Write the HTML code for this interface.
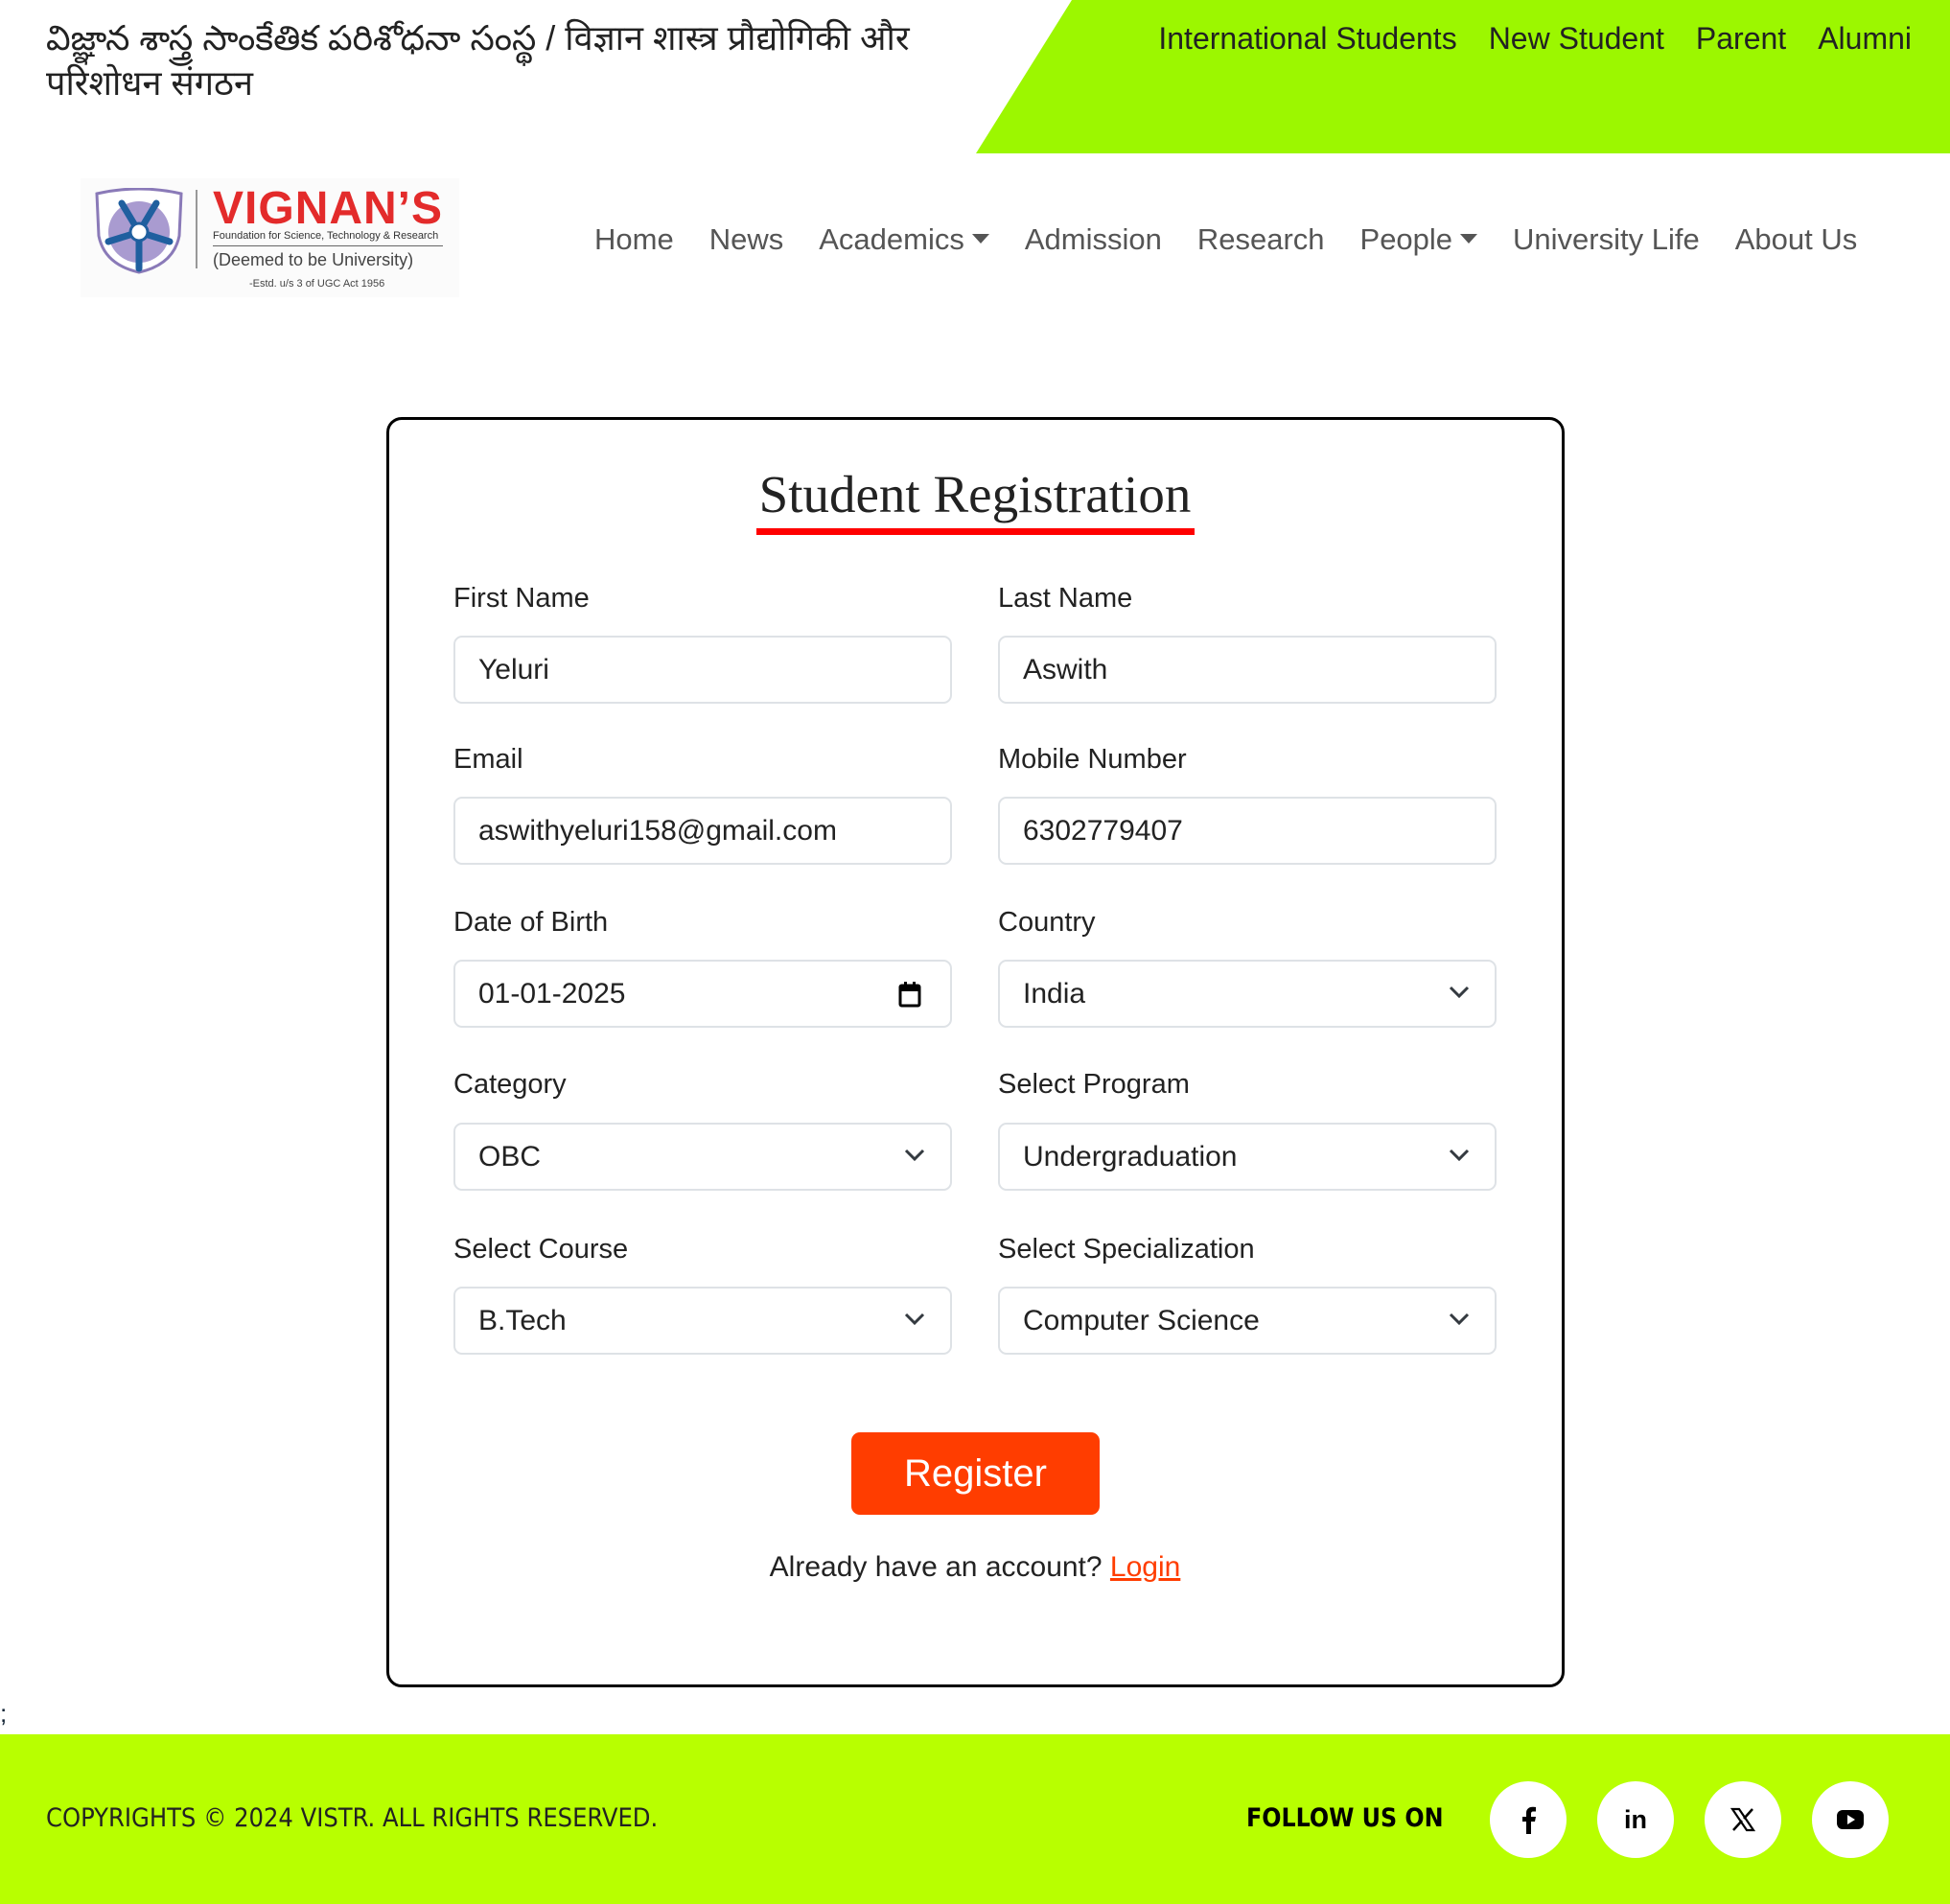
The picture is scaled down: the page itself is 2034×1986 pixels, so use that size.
<!DOCTYPE html>
<html><head><meta charset="utf-8"><style>
*{margin:0;padding:0;box-sizing:border-box}
body{width:2034px;height:1986px;position:relative;background:#fff;font-family:"Liberation Sans",Arial,sans-serif;color:#212529;overflow:hidden}
.abs{position:absolute}
.tl{left:48px;top:16px;font-size:36px;line-height:47px;color:#222;font-family:"Liberation Sans","Noto Sans CJK SC",sans-serif;width:1000px}
.green{left:0;top:0;width:2034px;height:160px;background:#9cf700;clip-path:polygon(1118px 0,2034px 0,2034px 160px,1018px 160px)}
.top{top:22px;right:40px;font-size:32px;color:#222;display:flex;gap:33px}
.nav{top:232px;left:620px;font-size:31px;color:#555;display:flex;gap:37px;white-space:nowrap}
.car::after{content:"";display:inline-block;border-left:9px solid transparent;border-right:9px solid transparent;border-top:10px solid #555;margin-left:8px;vertical-align:6px}
.card{left:403px;top:435px;width:1229px;height:1325px;border:3px solid #000;border-radius:16px}
.title{left:0;width:2034px;top:484px;text-align:center;font-family:"Liberation Serif",serif;font-size:55px;color:#222}
.ul{left:789px;top:551px;width:457px;height:7px;background:#f00}
.lb{font-size:29px;color:#222}
.in{width:520px;height:71px;border:2px solid #dee2e6;border-radius:9px;font-size:30px;color:#222;padding-left:24px;line-height:67px}
.chev{position:absolute;right:26px;top:24px}
.btn{left:888px;top:1494px;width:259px;height:86px;background:#ff3d00;border-radius:9px;color:#fff;font-size:40px;text-align:center;line-height:86px}
.al{left:0;width:2034px;text-align:center;top:1618px;font-size:30px;color:#222}
.al span{color:#ff3d00;text-decoration:underline}
.foot{left:0;top:1809px;width:2034px;height:177px;background:#b8ff00}
.circ{width:80px;height:80px;border-radius:50%;background:#fff;top:1858px;display:flex;align-items:center;justify-content:center}
</style></head><body>
<div class="abs green"></div>
<div class="abs tl">విజ్ఞాన శాస్త్ర సాంకేతిక పరిశోధనా సంస్థ / विज्ञान शास्त्र प्रौद्योगिकी और परिशोधन संगठन</div>
<div class="abs top"><span>International Students</span><span>New Student</span><span>Parent</span><span>Alumni</span></div>

<div class="abs" style="left:84px;top:186px;width:395px;height:124px;background:#fbfbfb"></div>
<svg class="abs" style="left:97px;top:196px" width="96" height="90" viewBox="0 0 96 90">
<path d="M4 6 Q48 -4 92 6 L90 50 Q84 80 48 88 Q12 80 6 50 Z" fill="#fff" stroke="#8a7ab8" stroke-width="3"/>
<circle cx="48" cy="46" r="32" fill="#a99bd0"/>
<g stroke="#1f5f9f" stroke-width="7" stroke-linecap="round"><line x1="48" y1="46" x2="48" y2="84"/><line x1="48" y1="46" x2="30" y2="16"/><line x1="48" y1="46" x2="66" y2="16"/><line x1="48" y1="46" x2="16" y2="56"/><line x1="48" y1="46" x2="80" y2="56"/></g>
<circle cx="48" cy="46" r="9" fill="#fff" stroke="#1f5f9f" stroke-width="3"/></svg>
<div class="abs" style="left:204px;top:198px;width:2px;height:82px;background:#999"></div>
<div class="abs" style="left:222px;top:190px;font-size:48px;font-weight:bold;color:#e32b2b;letter-spacing:1px">VIGNAN’S</div>
<div class="abs" style="left:222px;top:240px;font-size:11px;color:#333">Foundation for Science, Technology &amp; Research</div>
<div class="abs" style="left:222px;top:256px;width:240px;height:1px;background:#666"></div>
<div class="abs" style="left:222px;top:261px;font-size:18px;color:#444">(Deemed to be University)</div>
<div class="abs" style="left:260px;top:290px;font-size:11px;color:#444">-Estd. u/s 3 of UGC Act 1956</div>

<div class="abs nav"><span>Home</span><span>News</span><span class="car">Academics</span><span>Admission</span><span>Research</span><span class="car">People</span><span>University Life</span><span>About Us</span></div>

<div class="abs card"></div>
<div class="abs title">Student Registration</div>
<div class="abs ul"></div>

<div class="abs lb" style="left:473px;top:608px">First Name</div>
<div class="abs lb" style="left:1041px;top:608px">Last Name</div>
<div class="abs in" style="left:473px;top:663px">Yeluri</div>
<div class="abs in" style="left:1041px;top:663px">Aswith</div>

<div class="abs lb" style="left:473px;top:776px">Email</div>
<div class="abs lb" style="left:1041px;top:776px">Mobile Number</div>
<div class="abs in" style="left:473px;top:831px">aswithyeluri158@gmail.com</div>
<div class="abs in" style="left:1041px;top:831px">6302779407</div>

<div class="abs lb" style="left:473px;top:946px">Date of Birth</div>
<div class="abs lb" style="left:1041px;top:946px">Country</div>
<div class="abs in" style="left:473px;top:1001px">01-01-2025<svg class="chev" style="right:30px;top:20px" width="24" height="28" viewBox="0 0 24 28"><rect x="2" y="5" width="20" height="21" rx="1.5" fill="none" stroke="#000" stroke-width="3"/><rect x="2" y="5" width="20" height="6" fill="#000"/><rect x="6" y="1" width="3" height="5" fill="#000"/><rect x="15" y="1" width="3" height="5" fill="#000"/></svg></div>
<div class="abs in" style="left:1041px;top:1001px">India<svg class="chev" width="22" height="16" viewBox="0 0 22 16"><path d="M2 3l9 9 9-9" fill="none" stroke="#343a40" stroke-width="3"/></svg></div>

<div class="abs lb" style="left:473px;top:1115px">Category</div>
<div class="abs lb" style="left:1041px;top:1115px">Select Program</div>
<div class="abs in" style="left:473px;top:1171px">OBC<svg class="chev" width="22" height="16" viewBox="0 0 22 16"><path d="M2 3l9 9 9-9" fill="none" stroke="#343a40" stroke-width="3"/></svg></div>
<div class="abs in" style="left:1041px;top:1171px">Undergraduation<svg class="chev" width="22" height="16" viewBox="0 0 22 16"><path d="M2 3l9 9 9-9" fill="none" stroke="#343a40" stroke-width="3"/></svg></div>

<div class="abs lb" style="left:473px;top:1287px">Select Course</div>
<div class="abs lb" style="left:1041px;top:1287px">Select Specialization</div>
<div class="abs in" style="left:473px;top:1342px">B.Tech<svg class="chev" width="22" height="16" viewBox="0 0 22 16"><path d="M2 3l9 9 9-9" fill="none" stroke="#343a40" stroke-width="3"/></svg></div>
<div class="abs in" style="left:1041px;top:1342px">Computer Science<svg class="chev" width="22" height="16" viewBox="0 0 22 16"><path d="M2 3l9 9 9-9" fill="none" stroke="#343a40" stroke-width="3"/></svg></div>

<div class="abs btn">Register</div>
<div class="abs al">Already have an account? <span>Login</span></div>

<div class="abs" style="left:0;top:1772px;font-size:26px;color:#123">;</div>
<div class="abs foot"></div>
<div class="abs" style="left:48px;top:1881px;font-size:27px;color:#222;font-family:'DejaVu Sans Condensed','DejaVu Sans',sans-serif">COPYRIGHTS © 2024 VISTR. ALL RIGHTS RESERVED.</div>
<div class="abs" style="left:1300px;top:1881px;font-size:27px;font-weight:bold;color:#000;font-family:'DejaVu Sans Condensed','DejaVu Sans',sans-serif;transform:scaleX(.98);transform-origin:left">FOLLOW US ON</div>
<div class="abs circ" style="left:1554px"><svg width="20" height="30" viewBox="0 0 20 30"><path d="M13 30V17h4l1-5h-5V9c0-1.5.5-2.5 2.5-2.5H18V2c-.5 0-2-.2-3.5-.2C11 1.8 8 4 8 8v4H4v5h4v13z" fill="#000"/></svg></div>
<div class="abs circ" style="left:1666px;font-weight:bold;font-size:27px;color:#000">in</div>
<div class="abs circ" style="left:1778px"><svg width="26" height="26" viewBox="0 0 26 26"><path d="M2 2h7l15 22h-7z" fill="none" stroke="#000" stroke-width="2.2"/><path d="M23 2L14 12M3 24l9-10" stroke="#000" stroke-width="2.5"/></svg></div>
<div class="abs circ" style="left:1890px"><svg width="28" height="20" viewBox="0 0 28 20"><rect x="0" y="0" width="28" height="20" rx="6" fill="#000"/><path d="M11 5l8 5-8 5z" fill="#fff"/></svg></div>
</body></html>
